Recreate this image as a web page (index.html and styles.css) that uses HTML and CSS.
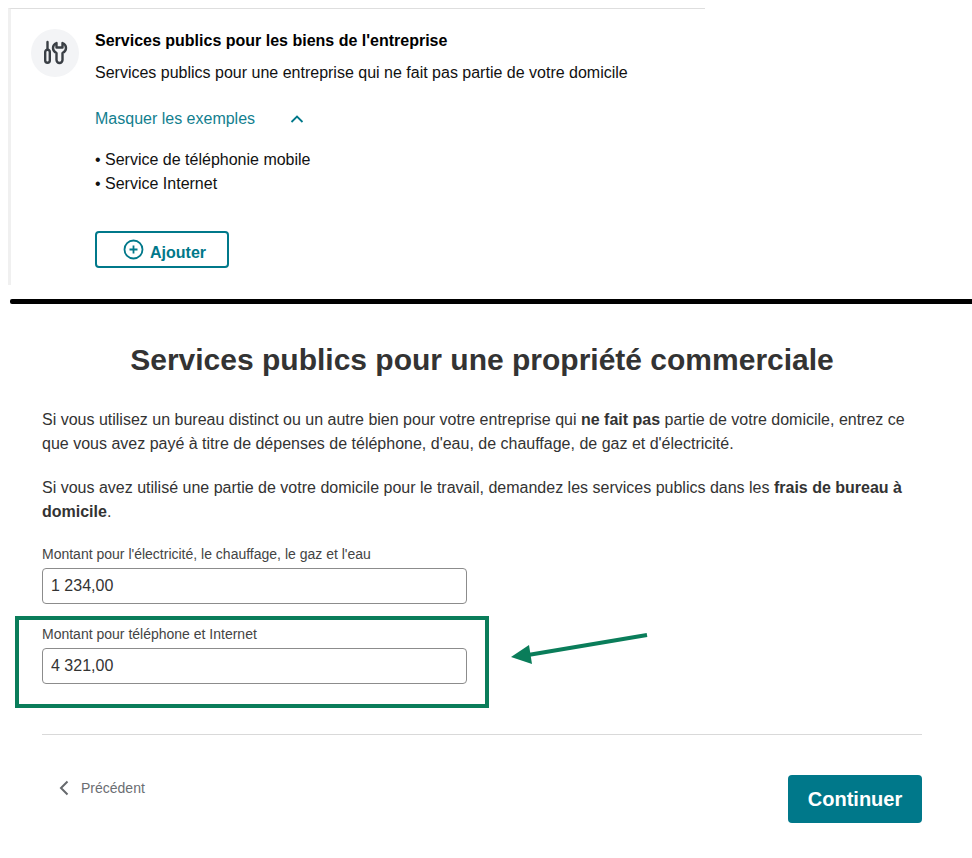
FILE: index.html
```html
<!DOCTYPE html>
<html lang="fr">
<head>
<meta charset="utf-8">
<title>Services publics</title>
<link rel="stylesheet" href="styles.css">
</head>
<body>
<section class="top">
  <div class="top-card">
    <div class="row">
      <div class="avatar">
        <svg width="26" height="26" viewBox="0 0 26 26" fill="none" stroke="#3a3f45" stroke-width="2.400" stroke-linecap="round" stroke-linejoin="round">
          <path d="M5.500 2v7"/>
          <path d="M3.200 12v8.500a2.300 2.300 0 0 0 4.600 0V12a2.300 2.300 0 0 0-4.600 0z"/>
          <path d="M14.500 3c-2.500 1-3.500 3.500-3.500 5 0 2.500 1.500 4 3.500 5v7a3 3 0 0 0 6 0v-7c2-1 3.500-2.500 3.500-5 0-1.500-1-4-3.500-5v4.500h-6z"/>
        </svg>
      </div>
      <div class="content">
        <h3 class="item-title">Services publics pour les biens de l'entreprise</h3>
        <p class="item-desc">Services publics pour une entreprise qui ne fait pas partie de votre domicile</p>
        <div class="toggle">
          <span>Masquer les exemples</span>
          <svg width="14" height="8" viewBox="0 0 14 8" fill="none" stroke="#00788a" stroke-width="1.800"><path d="M1.500 7 7 1.500 12.500 7"/></svg>
        </div>
        <ul class="examples">
          <li>• Service de téléphonie mobile</li>
          <li>• Service Internet</li>
        </ul>
        <button class="add" type="button">
          <svg width="21" height="21" viewBox="0 0 21 21" fill="none" stroke="#00788a" stroke-width="1.800"><circle cx="10.500" cy="10.500" r="9"/><path d="M10.500 6.500v8M6.500 10.500h8"/></svg>
          <span class="add-text">Ajouter</span>
        </button>
      </div>
    </div>
  </div>
</section>
<div class="rule"></div>
<main class="form">
  <h1 class="title">Services publics pour une propriété commerciale</h1>
  <p class="para">Si vous utilisez un bureau distinct ou un autre bien pour votre entreprise qui <b>ne fait pas</b> partie de votre domicile, entrez ce que vous avez payé à titre de dépenses de téléphone, d'eau, de chauffage, de gaz et d'électricité.</p>
  <p class="para">Si vous avez utilisé une partie de votre domicile pour le travail, demandez les services publics dans les <b>frais de bureau à domicile</b>.</p>
  <div class="field first">
    <label class="label" for="a">Montant pour l'électricité, le chauffage, le gaz et l'eau</label>
    <input class="input" id="a" value="1 234,00">
  </div>
  <div class="highlight">
    <div class="field">
      <label class="label" for="b">Montant pour téléphone et Internet</label>
      <input class="input" id="b" value="4 321,00">
    </div>
    <svg class="arrow" width="140" height="36" viewBox="0 0 140 36"><path d="M139 5 20 25" stroke="#0a7d5a" stroke-width="4" fill="none"/><path d="M3 27 21 15 24 34z" fill="#0a7d5a"/></svg>
  </div>
  <hr class="sep">
  <div class="nav">
    <a class="prev">
      <svg width="10" height="16" viewBox="0 0 10 16" fill="none" stroke="#66696d" stroke-width="2"><path d="M8.500 1.500 2 8l6.500 6.500"/></svg>
      <span>Précédent</span>
    </a>
    <button class="next" type="button">Continuer</button>
  </div>
</main>
</body>
</html>
```
FILE: styles.css
```css
* { box-sizing: border-box; }
html, body { margin: 0; padding: 0; background: #fff; }
body { width: 972px; height: 858px; overflow: hidden; font-family: "Liberation Sans", Arial, sans-serif; color: #333; }

.top { height: 285px; padding: 8px 267px 0 8px; }
.top-card { height: 277px; border-left: 3px solid #f0f0f0; border-top: 1px solid #dedede; }
.row { display: flex; padding: 20px 0 0 20px; }
.avatar { width: 48px; height: 48px; border-radius: 50%; background: #f3f4f6; display: flex; align-items: center; justify-content: center; flex: none; }
.content { margin-left: 16px; color: #111; }
.item-title { margin: 2px 0 0; font-size: 16px; line-height: 20px; font-weight: 700; color: #000; }
.item-desc { margin: 12px 0 0; font-size: 16px; line-height: 20px; }
.toggle { margin-top: 26px; display: flex; align-items: center; gap: 35px; font-size: 16px; line-height: 20px; color: #12808f; }
.examples { list-style: none; margin: 19px 0 0; padding: 0; font-size: 16px; line-height: 24px; }
.add { margin-top: 35px; width: 134px; height: 37px; border: 2px solid #00788a; border-radius: 4px; background: #fff; display: flex; align-items: center; justify-content: center; gap: 6px; padding: 0 0 0 5px; font: 700 16px "Liberation Sans", Arial, sans-serif; color: #00788a; }
.add-text { margin-top: 7px; }

.rule { height: 5px; margin: 14px 0 0 10px; background: #000; border-radius: 2px 0 0 2px; }

.form { padding: 0 50px 0 42px; }
.title { margin: 36px 0 0; text-align: center; font-size: 30px; line-height: 40px; font-weight: 700; color: #333; }
.para { margin: 28px 0 0; font-size: 16px; line-height: 24px; color: #333; }
.para + .para { margin-top: 20px; }
.para b { font-weight: 700; }
.field { width: 425px; }
.field.first { margin-top: 20px; }
.label { display: block; font-size: 14px; line-height: 20px; color: #444; }
.input { display: block; margin-top: 4px; width: 100%; height: 36px; border: 1px solid #8c8c8c; border-radius: 4px; padding: 0 8px; font: 16px "Liberation Sans", Arial, sans-serif; color: #333; background: #fff; }
.highlight { position: relative; margin: 12px 0 0 -27px; width: 474px; height: 92px; border: 4px solid #0a7d5a; padding: 4px 0 0 23px; }
.arrow { position: absolute; left: 489px; top: 10px; }
.sep { margin: 26px 0 0; border: 0; border-top: 1px solid #d9d9d9; }
.nav { margin-top: 40px; display: flex; justify-content: space-between; align-items: flex-start; }
.prev { margin: 3px 0 0 17px; display: flex; align-items: center; gap: 12px; font-size: 14px; line-height: 20px; color: #6b6e72; }
.next { width: 134px; height: 48px; border: 0; border-radius: 4px; background: #00788a; color: #fff; font: 700 20px "Liberation Sans", Arial, sans-serif; }
```
